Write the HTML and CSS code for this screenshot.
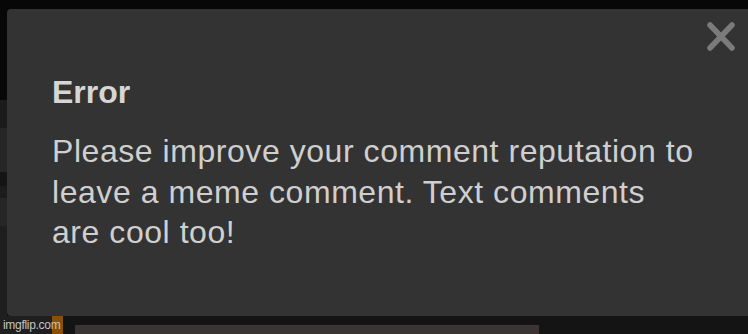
FILE: index.html
```html
<!DOCTYPE html>
<html lang="en">
<head>
  <meta charset="UTF-8">
  <meta name="viewport" content="width=device-width, initial-scale=1.0">
  <title>Error</title>
  <link rel="stylesheet" href="styles.css">
</head>
<body>

<div class="stage">
  <div class="top-gap"></div>

  <div class="row">
    <div class="edge">
      <div class="edge-block b1"></div>
      <div class="edge-block b2"></div>
      <div class="edge-block b3"></div>
      <div class="edge-block b4"></div>
      <div class="edge-block b5"></div>
      <div class="edge-block b6"></div>
      <div class="edge-block b7"></div>
    </div>

    <div class="dialog">
      <span class="close" title="Close">
        <svg width="30" height="31" viewBox="0 0 30 31">
          <path d="M4 4 L26 27 M26 4 L4 27" stroke="#7b7b7b" stroke-width="5.5" stroke-linecap="round" fill="none"/>
        </svg>
      </span>
      <h2 class="dialog-title">Error</h2>
      <p class="dialog-text">Please improve your comment reputation to leave a meme comment. Text comments are cool too!</p>
    </div>
  </div>

  <div class="footer">
    <div class="footer-left"></div>
    <div class="orange-bar"></div>
    <div class="thumb"></div>
    <!-- watermark sits over the footer -->
    <div class="watermark">imgflip.com</div>
  </div>
</div>

</body>
</html>
```

FILE: styles.css
```css
body {
  margin: 0;
  padding: 0;
  background-color: #070707;
  font-family: "Liberation Sans", Arial, sans-serif;
  overflow: hidden;
}

.stage {
  display: flex;
  flex-direction: column;
  height: 334px;
}

.top-gap {
  height: 9px;
}

.row {
  display: flex;
  height: 307px;
}

/* dark page bits peeking out on the left */
.edge {
  width: 7px;
  display: flex;
  flex-direction: column;
}

.edge-block.b1 { height: 91px; background-color: #070707; }
.edge-block.b2 { height: 28px; background-color: #1b1b1b; }
.edge-block.b3 { height: 44px; background-color: #262626; }
.edge-block.b4 { height: 14px; background-color: #141414; }
.edge-block.b5 { height: 12px; background-color: #1c1c1c; }
.edge-block.b6 { height: 28px; background-color: #262626; }
.edge-block.b7 { flex: 1; background-color: #1e1e1e; }

.dialog {
  flex: 1;
  position: relative;
  background-color: #333333;
  border-radius: 4px 0 0 4px;
  padding: 63px 0 0 45px;
}

.close {
  position: absolute;
  top: 12px;
  right: 12px;
  cursor: pointer;
}

.close svg {
  display: block;
}

.dialog-title {
  margin: 0 0 19px 0;
  font-size: 32px;
  line-height: 40px;
  font-weight: bold;
  color: #d6d6d6;
}

.dialog-text {
  margin: 0;
  width: 648px;
  font-size: 32px;
  line-height: 40.5px;
  letter-spacing: 0.55px;
  color: #cfcfcf;
}

.footer {
  flex: 1;
  position: relative;
  display: flex;
  background-color: #141414;
}

.footer-left {
  width: 52px;
  background-color: #1f1f1f;
}

.watermark {
  position: absolute;
  left: 3px;
  top: 0;
  color: #c4c4c4;
  font-size: 12px;
  line-height: 18px;
  letter-spacing: -0.3px;
  white-space: nowrap;
}

.orange-bar {
  width: 11px;
  background-color: #8a5006;
}

.thumb {
  width: 464px;
  margin: 9px 0 0 12px;
  background-color: #3a3534;
}
```
